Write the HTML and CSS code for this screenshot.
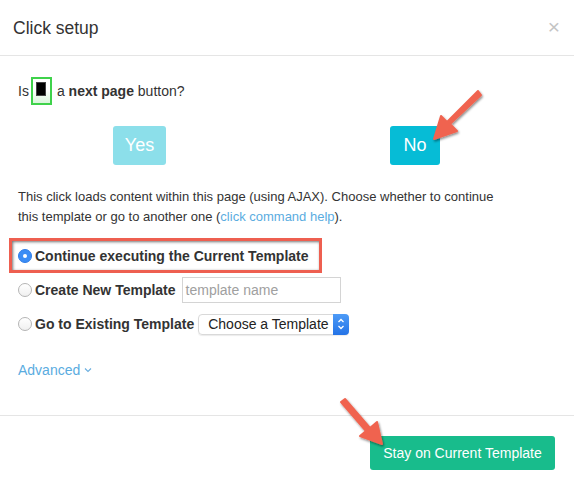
FILE: index.html
```html
<!DOCTYPE html>
<html>
<head>
<meta charset="utf-8">
<link rel="stylesheet" href="styles.css">
</head>
<body>
<div class="modal">
  <div class="header">
    <h1 class="title">Click setup</h1>
    <span class="close">×</span>
  </div>
  <div class="body">
    <div class="question">
      <span>Is</span>
      <span class="thumb"><span class="thumb-inner"></span></span>
      <span>a <b>next page</b> button?</span>
    </div>
    <div class="choices">
      <button class="btn btn-yes">Yes</button>
      <button class="btn btn-no">No</button>
    </div>
    <p class="desc">This click loads content within this page (using AJAX). Choose whether to continue this template or go to another one (<a class="link">click command help</a>).</p>
    <div class="options">
      <div class="opt opt-selected">
        <span class="radio radio-on"></span>
        <span class="opt-label">Continue executing the Current Template</span>
      </div>
      <div class="opt">
        <span class="radio"></span>
        <span class="opt-label">Create New Template</span>
        <span class="input">template name</span>
      </div>
      <div class="opt">
        <span class="radio"></span>
        <span class="opt-label">Go to Existing Template</span>
        <span class="select">Choose a Template<span class="sel-arrow"><svg width="8" height="14" viewBox="0 0 8 14"><path d="M1.5 5 L4 2.5 L6.5 5 M1.5 9 L4 11.5 L6.5 9" fill="none" stroke="#fff" stroke-width="1.3"/></svg></span></span>
      </div>
    </div>
    <div class="advanced">Advanced <svg width="8" height="6" viewBox="0 0 8 6"><path d="M1 1.5 L4 4.5 L7 1.5" fill="none" stroke="#6aaedf" stroke-width="1.1"/></svg></div>
  </div>
  <div class="footer">
    <button class="btn-stay">Stay on Current Template</button>
  </div>
  <svg class="arrows" width="574" height="487" viewBox="0 0 574 487">
    <defs>
      <filter id="sh" x="-20%" y="-20%" width="140%" height="140%">
        <feDropShadow dx="1" dy="1.5" stdDeviation="1.2" flood-color="#000" flood-opacity="0.45"/>
      </filter>
    </defs>
    <g filter="url(#sh)" fill="#f06450" stroke="none">
      <path d="M478 91 L481 95 L450 124 L457 131 L434 139 L441 116 L447 122 Z" stroke="#f06450" stroke-width="2" stroke-linejoin="round"/>
      <path d="M341 402 L345 399 L370 428 L377 422 L382 444 L360 436 L366 431 Z" stroke="#f06450" stroke-width="2" stroke-linejoin="round"/>
    </g>
  </svg>
</div>
</body>
</html>
```
FILE: styles.css
```css
* { box-sizing: border-box; }
html, body { margin: 0; padding: 0; background: #fff; }
body {
  font-family: "Liberation Sans", Arial, sans-serif;
  color: #333;
  width: 574px;
  height: 487px;
  overflow: hidden;
}
.modal {
  position: relative;
  width: 574px;
  height: 487px;
  background: #fff;
}
.header {
  height: 56px;
  border-bottom: 1px solid #e5e5e5;
  display: flex;
  align-items: center;
  justify-content: space-between;
  padding: 0 14px 0 13px;
}
.title {
  margin: 0;
  font-size: 17.5px;
  font-weight: normal;
  color: #333;
  padding-top: 2px;
}
.close {
  font-size: 21px;
  color: #c4c4c4;
  line-height: 1;
  margin-top: -2px;
}
.body {
  padding: 21px 18px 0 18px;
  height: 359px;
}
.question {
  display: flex;
  align-items: center;
  gap: 4px;
  font-size: 14px;
  height: 28px;
}
.question b { font-weight: bold; }
.thumb {
  width: 21px;
  height: 28px;
  margin-left: -2px;
  border: 2px solid #3fd24b;
  background: linear-gradient(#ffffff 45%, #d9f5db);
  display: flex;
  justify-content: center;
  padding-top: 3px;
  margin-right: 1px;
}
.thumb-inner {
  width: 10px;
  height: 14px;
  background: #000;
  border: 1px solid #444;
}
.choices {
  display: flex;
  margin-top: 21px;
  height: 39px;
}
.btn {
  border: none;
  border-radius: 3px;
  color: #fff;
  font-family: "Liberation Sans", Arial, sans-serif;
  font-size: 18px;
  height: 39px;
  padding: 0;
}
.btn-yes {
  width: 53px;
  margin-left: 95px;
  background: #8cdfea;
}
.btn-no {
  width: 50px;
  margin-left: 224px;
  background: #06bcd6;
}
.desc {
  margin: 22px 0 0 0;
  width: 480px;
  font-size: 13px;
  line-height: 20px;
  color: #333;
}
.link { color: #5aacdf; }
.options {
  margin-top: 11px;
  display: flex;
  flex-direction: column;
}
.opt {
  display: flex;
  align-items: center;
  height: 34px;
  font-size: 14px;
  font-weight: bold;
  color: #333;
  padding-left: 0;
}
.opt-selected {
  margin-left: -9px;
  width: 313px;
  height: 35px;
  border: 3px solid #ee5f50;
  box-shadow: inset 1px 1px 3px rgba(0,0,0,0.55);
  padding-left: 6px;
}
.radio {
  width: 14px;
  height: 14px;
  border-radius: 50%;
  border: 1px solid #b5b5b5;
  background: linear-gradient(#fff, #f0f0f0);
  margin-right: 3px;
  flex: none;
}
.radio-on {
  background: #3b8df5;
  border: 1px solid #2f7ee8;
  position: relative;
}
.radio-on::after {
  content: "";
  position: absolute;
  width: 4px;
  height: 4px;
  left: 4px;
  top: 4px;
  border-radius: 50%;
  background: #fff;
}
.input {
  margin-left: 6px;
  width: 159px;
  height: 26px;
  border: 1px solid #d4d4d4;
  font-weight: normal;
  color: #a0a0a0;
  display: flex;
  align-items: center;
  padding-left: 3px;
  font-size: 14px;
}
.select {
  margin-left: 4px;
  width: 151px;
  height: 21px;
  border: 1px solid #d9d9d9;
  border-radius: 4px;
  font-weight: normal;
  color: #222;
  display: flex;
  align-items: center;
  justify-content: space-between;
  padding-left: 9px;
  font-size: 14px;
  box-shadow: 0 1px 1px rgba(0,0,0,0.08);
}
.sel-arrow {
  width: 16px;
  height: 21px;
  margin-top: -1px;
  margin-bottom: -1px;
  margin-right: -1px;
  background: linear-gradient(#4d9bf7, #2473e6);
  border-radius: 0 4px 4px 0;
  display: flex;
  align-items: center;
  justify-content: center;
}
.advanced {
  margin-top: 21px;
  font-size: 14px;
  color: #5aacdf;
  display: flex;
  align-items: center;
  gap: 4px;
}
.footer {
  border-top: 1px solid #e5e5e5;
  display: flex;
  justify-content: flex-end;
  padding: 20px 19px 0 0;
}
.btn-stay {
  width: 185px;
  height: 34px;
  border: none;
  border-radius: 3px;
  background: #18bc8c;
  color: #fff;
  font-family: "Liberation Sans", Arial, sans-serif;
  font-size: 14px;
  padding: 0;
}
.arrows {
  position: absolute;
  left: 0;
  top: 0;
  pointer-events: none;
}
```
